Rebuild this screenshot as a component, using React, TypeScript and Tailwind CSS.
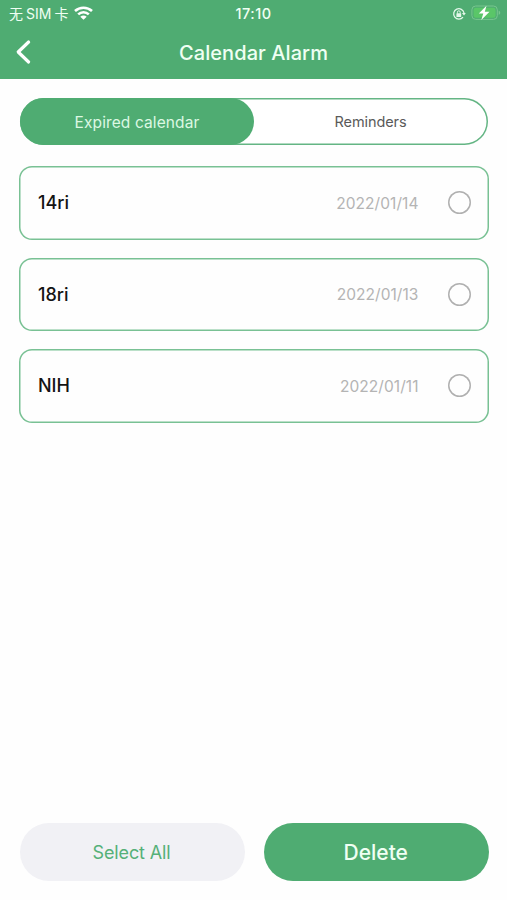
import React from "react";

type Reminder = { title: string; date: string };

const reminders: Reminder[] = [
  { title: "14ri", date: "2022/01/14" },
  { title: "18ri", date: "2022/01/13" },
  { title: "NIH", date: "2022/01/11" },
];

function WifiIcon() {
  return (
    <svg className="-mt-px ml-[6px] h-[14px] w-[19px]" viewBox="0 0 19 14" fill="none" stroke="#fff" strokeWidth="2.6">
      <path d="M1 5C5.8.6 13.2.6 18 5" />
      <path d="M4.2 8.4c3-2.9 7.6-2.9 10.6 0" />
      <path d="M9.5 13.8 6.3 10.8c1.8-1.7 4.6-1.7 6.4 0Z" fill="#fff" stroke="none" />
    </svg>
  );
}

function RotationLockIcon() {
  return (
    <svg className="h-[14px] w-[14px]" viewBox="0 0 14 14" fill="none" stroke="#e4f8ea">
      <path d="M11 10.1A5.2 5.2 0 1 1 12 6" strokeWidth="1.3" />
      <path d="m9.9 6 2.1 2.6L13.8 6Z" fill="#e4f8ea" stroke="none" />
      <rect x="4.4" y="6.2" width="4.8" height="3.8" rx=".6" fill="#e4f8ea" stroke="none" />
      <path d="M5.4 6.5V5.2a1.4 1.4 0 0 1 2.8 0v1.3" strokeWidth="1" />
    </svg>
  );
}

function BatteryIcon() {
  return (
    <svg className="-mt-px ml-[5px] h-[16px] w-[30px]" viewBox="0 0 30 16" fill="none">
      <rect x=".9" y="1" width="25.4" height="13.4" rx="3.8" stroke="#78c68e" />
      <rect x="2.6" y="2.7" width="22" height="10" rx="2.3" fill="#5ac668" />
      <path d="M27.7 5.7v4c1-.4 1.5-1.1 1.5-2s-.5-1.6-1.5-2Z" fill="#78c68e" />
      <path d="M15.5.8 7.8 8.4h4.5l-2 6.5 8.2-8.2h-4.7Z" fill="#fff" />
    </svg>
  );
}

function Header() {
  return (
    <header className="h-[79px] bg-[#4fac72] text-[#effff3]">
      <div className="grid h-[27px] grid-cols-3 items-center pl-[9px] pr-[6px] text-[14px]">
        <div className="flex items-center">
          <span className="flex gap-[3px] whitespace-nowrap text-[14px] leading-5">
            <span>无</span>
            <span>SIM</span>
            <span>卡</span>
          </span>
          <WifiIcon />
        </div>
        <span className="pr-[3px] text-center text-[14.5px] font-medium tracking-[0.5px]">17:10</span>
        <div className="flex items-center justify-end">
          <RotationLockIcon />
          <BatteryIcon />
        </div>
      </div>
      <div className="grid h-[50px] grid-cols-[60px_1fr_60px] items-center">
        <button aria-label="Back" className="pl-[15px]">
          <svg className="h-[26px] w-[18px]" viewBox="0 0 18 26" fill="none" stroke="#fff" strokeWidth="3.2" strokeLinecap="round" strokeLinejoin="round">
            <path d="M13.6 3 3.2 13l10.4 10" />
          </svg>
        </button>
        <h1 className="pt-[2px] text-center text-[20px] font-medium tracking-[0.08px]">Calendar Alarm</h1>
      </div>
    </header>
  );
}

function Tabs() {
  return (
    <div className="ml-[20px] mr-[19px] mt-[19px] flex h-[47px] rounded-full bg-white shadow-[inset_0_0_0_1.5px_#64b584]">
      <button className="w-[234px] rounded-full bg-[#4fac72] pt-[2px] text-[15.5px] tracking-[0.1px] text-[#dcf8e3]">Expired calendar</button>
      <button className="flex-1 pr-px pt-px text-[14.5px] tracking-[-0.1px] text-[#5a5a5a]">Reminders</button>
    </div>
  );
}

function ReminderCard({ title, date }: Reminder) {
  return (
    <li className="flex h-[73.5px] items-center rounded-[13px] pl-[19px] pr-[18px] shadow-[inset_0_0_0_1.5px_#79c194]">
      <span className="flex-1 text-[18px] font-medium text-[#141414]">{title}</span>
      <span className="pt-px text-[15.5px] tracking-[0.05px] text-[#b4b4b4]">{date}</span>
      <span className="ml-[29.5px] size-[23px] rounded-full shadow-[inset_0_0_0_1.5px_#b0b0b0]" />
    </li>
  );
}

export default function App() {
  return (
    <main className="flex h-[900px] w-[507px] flex-col bg-[#fefefe] font-['Inter','Noto_Sans_CJK_SC',sans-serif]">
      <Header />
      <Tabs />
      <ul className="ml-[19px] mr-[18px] mt-[21px] flex flex-col gap-[18px]">
        {reminders.map((item) => (
          <ReminderCard key={item.title} {...item} />
        ))}
      </ul>
      <footer className="mt-auto mb-[19px] ml-[20px] mr-[18px] flex h-[58px] gap-[18.5px]">
        <button className="w-[225px] rounded-full bg-[#f1f1f5] pr-[2px] pt-px text-[18px] tracking-[-0.15px] text-[#55b078]">Select All</button>
        <button className="flex-1 rounded-full bg-[#4fac72] pr-px pt-[2px] text-[21px] font-medium text-[#effff3]">Delete</button>
      </footer>
    </main>
  );
}
